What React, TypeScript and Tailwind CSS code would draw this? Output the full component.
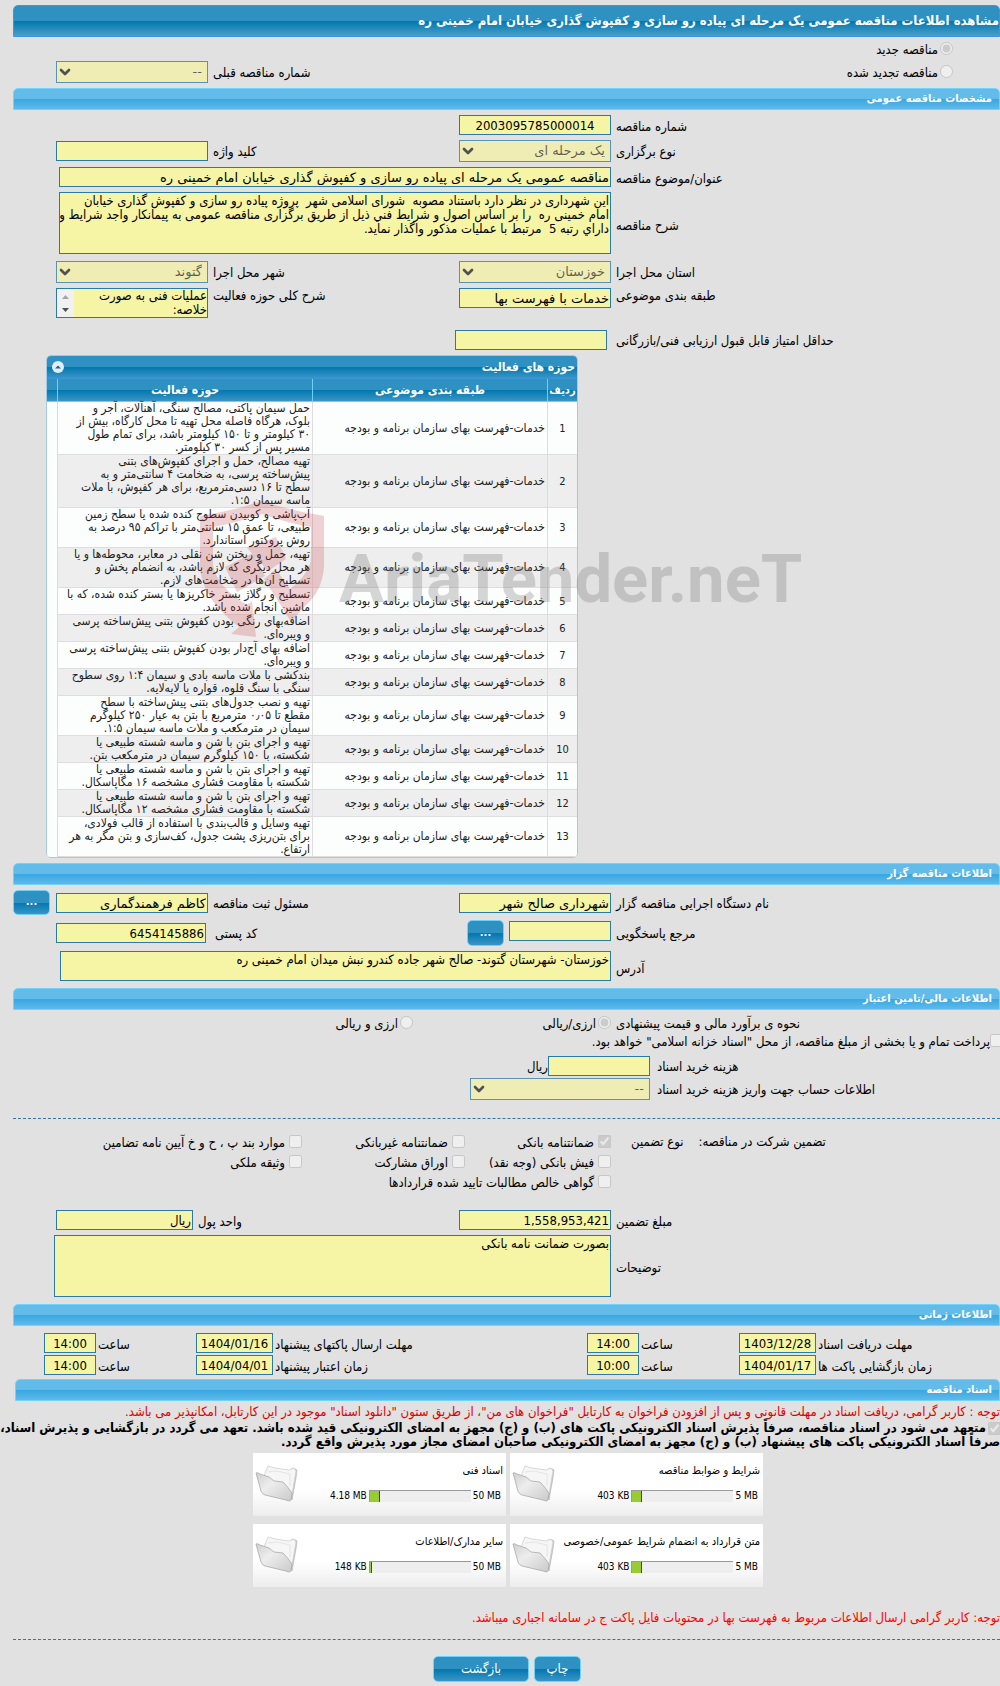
import React, { useId } from 'react';
import { ChevronDown } from 'lucide-react';

const field =
  'block w-full h-5 rounded-none border border-[#2a7aa8] bg-[#f6f4a5] px-px text-[13px] leading-[18px] text-black outline-none';
const area =
  'block w-full resize-none overflow-hidden rounded-none border border-[#2a7aa8] bg-[#f6f4a5] px-px py-px text-[13px] leading-[14px] text-black outline-none';
const wide = "font-['DejaVu_Sans',sans-serif]";
const formGrid = 'grid grid-cols-[389fr_152px_251fr_152px] pl-14';

type LabelProps = { htmlFor?: string; children: React.ReactNode; className?: string };

function Label({ htmlFor, children, className = 'pt-1' }: LabelProps) {
  return (
    <label htmlFor={htmlFor} className={`block whitespace-nowrap pl-[5px] text-left leading-4 ${className}`}>
      {children}
    </label>
  );
}

function Section({ children, className = 'ml-[13px]' }: { children: React.ReactNode; className?: string }) {
  return (
    <h2
      className={`h-[22px] rounded-t-[5px] border border-[#74d2fa] bg-[linear-gradient(#63bbea_0_10px,#37a7e2_10px,#5fb9ea)] px-[7px] text-[11px] font-bold leading-5 text-white ${className}`}
    >
      {children}
    </h2>
  );
}

function Choice({ id, value, className = 'w-full' }: { id: string; value: string; className?: string }) {
  return (
    <div className={`relative h-[22px] opacity-75 ${className}`}>
      <select
        id={id}
        disabled
        className={`block h-[22px] w-full appearance-none rounded-none border border-[#2a7aa8] bg-[#f4f2a4] px-[5px] text-[13px] leading-5 text-black/80 ${wide}`}
      >
        <option>{value}</option>
      </select>
      <ChevronDown className="pointer-events-none absolute left-px top-[3px] size-4" strokeWidth={4} color="#222" />
    </div>
  );
}

function Tick({
  type,
  label,
  checked = false,
  className = '',
  gap = 'gap-1',
}: {
  type: 'radio' | 'checkbox';
  label: string;
  checked?: boolean;
  className?: string;
  gap?: string;
}) {
  const id = useId();
  return (
    <div className={`flex items-center whitespace-nowrap ${gap} ${className}`}>
      <input id={id} type={type} disabled checked={checked} readOnly className="m-0 size-[13px] shrink-0" />
      <label htmlFor={id} className="pt-[3px] leading-4">
        {label}
      </label>
    </div>
  );
}

const glossy =
  'rounded-[5px] border border-[#6fd0fa] bg-[linear-gradient(#2e91c1_0_50%,#0077b0_50%,#3a95c4)] text-white';

const agency = 'خدمات-فهرست بهای سازمان برنامه و بودجه';

const activities: string[][] = [
  ['حمل سیمان پاکتی، مصالح سنگی، آهنآلات، آجر و', 'بلوک، هرگاه فاصله محل تهیه تا محل کارگاه، بیش از', '۳۰ کیلومتر و تا ۱۵۰ کیلومتر باشد، برای تمام طول', 'مسیر پس از کسر ۳۰ کیلومتر.'],
  ['تهیه مصالح، حمل و اجرای کفپوش‌های بتنی', 'پیش‌ساخته پرسی، به ضخامت ۴ سانتی‌متر و به', 'سطح تا ۱۶ دسی‌مترمربع، برای هر کفپوش، با ملات', 'ماسه سیمان ۱:۵.'],
  ['آب‌پاشی و کوبیدن سطوح کنده شده یا سطح زمین', 'طبیعی، تا عمق ۱۵ سانتی‌متر با تراکم ۹۵ درصد به', 'روش پروکتور استاندارد.'],
  ['تهیه، حمل و ریختن شن نقلی در معابر، محوطه‌ها و یا', 'هر محل دیگری که لازم باشد، به انضمام پخش و', 'تسطیح آن‌ها در ضخامت‌های لازم.'],
  ['تسطیح و رگلاژ بستر خاکریزها یا بستر کنده شده، که با', 'ماشین انجام شده باشد.'],
  ['اضافه‌بهای رنگی بودن کفپوش بتنی پیش‌ساخته پرسی', 'و ویبره‌ای.'],
  ['اضافه بهای آج‌دار بودن کفپوش بتنی پیش‌ساخته پرسی', 'و ویبره‌ای.'],
  ['بندکشی با ملات ماسه بادی و سیمان ۱:۴ روی سطوح', 'سنگی با سنگ قلوه، قواره یا لایه‌لایه.'],
  ['تهیه و نصب جدول‌های بتنی پیش‌ساخته با سطح', 'مقطع تا ۰٫۰۵ مترمربع با بتن به عیار ۲۵۰ کیلوگرم', 'سیمان در مترمکعب و ملات ماسه سیمان ۱:۵.'],
  ['تهیه و اجرای بتن با شن و ماسه شسته طبیعی یا', 'شکسته، با ۱۵۰ کیلوگرم سیمان در مترمکعب بتن.'],
  ['تهیه و اجرای بتن با شن و ماسه شسته طبیعی یا', 'شکسته با مقاومت فشاری مشخصه ۱۶ مگاپاسکال.'],
  ['تهیه و اجرای بتن با شن و ماسه شسته طبیعی یا', 'شکسته با مقاومت فشاری مشخصه ۱۲ مگاپاسکال.'],
  ['تهیه وسایل و قالب‌بندی با استفاده از قالب فولادی،', 'برای بتن‌ریزی پشت جدول، کف‌سازی و بتن مگر به هر', 'ارتفاع.'],
];

function ActivityTable() {
  const head =
    'h-[23px] border-b border-[#6cd0f8] bg-[linear-gradient(#2e91c1_0_50%,#0077b0_50%,#3a95c4)] p-0 text-center font-bold text-white whitespace-nowrap';
  return (
    <div className="relative mt-[5px] ml-[46px] w-[532px]">
      <div className="overflow-hidden rounded-[5px] border border-[#a6c9e2] bg-[#fcfefe]">
        <div className="flex h-[23px] items-center justify-between border-b border-[#3c96dc] bg-[linear-gradient(#2e91c1_0_50%,#0077b0_50%,#3a95c4)] pl-[5px] pr-0.5 text-[12px] font-bold text-white">
          <span>حوزه های فعالیت</span>
          <button type="button" aria-label="بستن جدول" className="grid size-3 place-items-center rounded-full bg-[#e4ecf8]">
            <svg viewBox="0 0 12 12" className="size-3">
              <path d="M3 7.5L6 4.5L9 7.5Z" fill="#0a6a9c" />
            </svg>
          </button>
        </div>
        <table className="w-full table-fixed border-separate border-spacing-0 text-[12px] leading-[13px] text-[#222]">
          <colgroup>
            <col className="w-[30px]" />
            <col className="w-[235px]" />
            <col className="w-[255px]" />
            <col />
          </colgroup>
          <thead>
            <tr>
              <th className={`${head} border-l text-[11px]`}>ردیف</th>
              <th className={`${head} border-l`}>طبقه بندی موضوعی</th>
              <th className={`${head} border-l`}>حوزه فعالیت</th>
              <th aria-label="اسکرول" className={head} />
            </tr>
          </thead>
          <tbody>
            {activities.map((lines, i) => (
              <tr key={i} className={i % 2 ? 'bg-[#eee]' : 'bg-[#fcfefe]'}>
                <td className="border-b border-l border-[#ddd] p-0 text-center text-[11px]">{i + 1}</td>
                <td className="border-b border-l border-[#ddd] py-0 pr-0.5 pl-0 whitespace-nowrap">{agency}</td>
                <td className="border-b border-l border-[#ddd] py-0 pr-0.5 pl-0 whitespace-nowrap">
                  {lines.map((line) => (
                    <div key={line} className="h-[13px]">
                      {line}
                    </div>
                  ))}
                </td>
                <td className="bg-[#fcfefe] p-0" />
              </tr>
            ))}
          </tbody>
        </table>
      </div>
      <svg
        viewBox="0 0 620 150"
        className="pointer-events-none absolute top-[142px] left-[146px] h-[150px] w-[620px]"
        direction="ltr"
        aria-hidden="true"
      >
        <g fill="#c8323c" fillOpacity="0.22">
          <path
            fillRule="evenodd"
            d="M8 19Q40 14 70 4Q100 14 132 19V70Q130 95 113 109L99 125L88 107L72 82L84 72L98 92Q119 75 119 60V30Q95 26 70 17Q45 26 21 30V68Q25 90 55 108L60 104L64 140L39 137L47 130Q8 100 8 68Z"
          />
          <path d="M33 70L61 56L73 79L45 95ZM55 51L84 40L94 62L76 74Z" />
        </g>
        <text
          x="147"
          y="105"
          fill="#777"
          fillOpacity="0.3"
          fontFamily="Roboto, sans-serif"
          fontWeight="700"
          fontSize="67"
        >
          AriaTender.neT
        </text>
      </svg>
    </div>
  );
}

function Folder() {
  return (
    <svg viewBox="0 0 44 40" className="size-11" aria-hidden="true">
      <defs>
        <linearGradient id="folderFront" x1="0" y1="0" x2="1" y2="1">
          <stop offset="0" stopColor="#cfcfcf" />
          <stop offset="0.4" stopColor="#ededed" />
          <stop offset="1" stopColor="#cacaca" />
        </linearGradient>
      </defs>
      <path d="M37 36L34 18L36 5Q39 3 42 6L41 14Z" fill="#c6c6c6" stroke="#b4b4b4" strokeWidth="0.6" />
      <path d="M9 12L13 2L20 4L34 6L39 4L41 7L37 30L14 20Z" fill="#f6f6f6" stroke="#cfcfcf" strokeWidth="0.8" />
      <path d="M13 8L22 7L35 10L35 22" fill="none" stroke="#e0e0e0" strokeWidth="0.8" />
      <path
        d="M1 9Q2 8 5 10L14 13L19 17L28 18Q33 23 37 29L36 36Q35 38 31 36L10 31Q7 30 6 27Z"
        fill="url(#folderFront)"
        stroke="#a9a9a9"
        strokeWidth="0.8"
      />
    </svg>
  );
}

function DocCard({ title, used, limit, percent }: { title: string; used: string; limit: string; percent: number }) {
  return (
    <article className="flex h-[63px] w-[253px] items-start justify-between bg-[linear-gradient(#fff_60%,#ededed)] pr-[3px] pl-0.5 text-[11px]">
      <div className="pt-[10px]">
        <h3 className="h-4 whitespace-nowrap leading-4">{title}</h3>
        <div dir="ltr" className="mt-[9px] flex w-[192px] items-center justify-end gap-0.5 pr-0.5 text-[10px] leading-4">
          <span>{used}</span>
          <div className="h-3 w-[102px] border-t border-l border-[#999] bg-[#eee]">
            <div className="h-full border-r border-[#444] bg-[#9c3]" style={{ width: `${percent}%` }} />
          </div>
          <span>{limit}</span>
        </div>
      </div>
      <div className="pt-[9px]">
        <Folder />
      </div>
    </article>
  );
}

function Deadline({ id, label, date, time }: { id: string; label: string; date: string; time: string }) {
  return (
    <>
      <Label htmlFor={id} className="pt-1 !pl-0.5">{label}</Label>
      <input id={id} readOnly defaultValue={date} className={`${field} text-center`} dir="ltr" />
      <Label htmlFor={`${id}-time`} className="pt-1 !pl-0.5">ساعت</Label>
      <input id={`${id}-time`} readOnly defaultValue={time} className={`${field} text-center`} dir="ltr" />
    </>
  );
}

export default function App() {
  return (
    <main
      dir="rtl"
      className="min-h-[1686px] overflow-hidden bg-[#e1e1e1] pt-[5px] font-['DejaVu_Sans_Condensed','DejaVu_Sans',sans-serif] text-[13px] text-black"
    >
      <h1 className="ml-[13px] flex h-8 items-center whitespace-nowrap rounded-t-[5px] border border-[#3c96dc] bg-[linear-gradient(#2e91c1_0_50%,#0077b0_50%,#4a9fc8)] text-[13px] font-bold text-white">
        مشاهده اطلاعات مناقصه عمومی یک مرحله ای پیاده رو سازی و کفپوش گذاری خیابان امام خمینی ره
      </h1>

      <div className="flex h-[51px] justify-between pr-[47px] pl-14">
        <div>
          <Tick type="radio" checked label="مناقصه جدید" className="h-[23px]" gap="gap-0.5" />
          <Tick type="radio" label="مناقصه تجدید شده" className="h-[23px]" gap="gap-0.5" />
        </div>
        <div className="flex pt-6">
          <Label htmlFor="previous">شماره مناقصه قبلی</Label>
          <Choice id="previous" value="--" className="w-[152px]" />
        </div>
      </div>

      <Section>مشخصات مناقصه عمومی</Section>
      <div className={`${formGrid} mt-[5px]`}>
        <Label htmlFor="number">شماره مناقصه</Label>
        <input id="number" readOnly defaultValue="2003095785000014" className={`${field} text-center`} />
      </div>
      <div className={`${formGrid} mt-[5px]`}>
        <Label htmlFor="kind">نوع برگزاری</Label>
        <Choice id="kind" value="یک مرحله ای" />
        <Label htmlFor="keyword">کلید واژه</Label>
        <input id="keyword" readOnly className={`${field} mt-px`} />
      </div>
      <div className="mt-[5px] grid grid-cols-[389fr_552fr] pl-[59px]">
        <Label htmlFor="title">عنوان/موضوع مناقصه</Label>
        <input
          id="title"
          readOnly
          defaultValue="مناقصه عمومی یک مرحله ای پیاده رو سازی و کفپوش گذاری خیابان امام خمینی ره"
          className={`${field} ${wide}`}
        />
      </div>
      <div className="mt-[5px] grid grid-cols-[389fr_552fr] pl-[59px]">
        <Label htmlFor="description" className="self-center pt-1.5">شرح مناقصه</Label>
        <textarea
          id="description"
          readOnly
          className={`${area} h-[62px] whitespace-pre`}
          defaultValue={
            'این شهرداری در نظر دارد باستناد مصوبه  شورای اسلامی شهر  پروژه پیاده رو سازی و کفپوش گذاری خیابان\nامام خمینی ره  را بر اساس اصول و شرایط فني ذیل از طریق برگزاری مناقصه عمومی به پیمانکار واجد شرایط و\nداراي رتبه 5  مرتبط با عملیات مذکور واگذار نماید.'
          }
        />
      </div>
      <div className={`${formGrid} mt-[7px]`}>
        <Label htmlFor="province">استان محل اجرا</Label>
        <Choice id="province" value="خوزستان" />
        <Label htmlFor="city">شهر محل اجرا</Label>
        <Choice id="city" value="گتوند" />
      </div>
      <div className={`${formGrid} mt-[5px]`}>
        <Label htmlFor="subject" className="pt-0">طبقه بندی موضوعی</Label>
        <input id="subject" readOnly defaultValue="خدمات با فهرست بها" className={`${field} ${wide}`} />
        <Label htmlFor="scope" className="pt-0">شرح کلی حوزه فعالیت</Label>
        <div className="flex h-[30px] overflow-hidden border border-[#2a7aa8] bg-[#f6f4a5]">
          <textarea
            id="scope"
            readOnly
            className="block h-7 min-w-0 flex-1 resize-none overflow-hidden whitespace-pre text-[13px] leading-[14px] outline-none"
            defaultValue={'عملیات فنی به صورت\nخلاصه:'}
          />
          <svg viewBox="0 0 17 28" className="h-7 w-[17px] bg-[#f1f1f1]" aria-hidden="true">
            <path d="M5 10L8.500 6L12 10Z" fill="#a3a3a3" />
            <path d="M5 19L8.500 23L12 19Z" fill="#505050" />
          </svg>
        </div>
      </div>
      <div className="mt-3 grid grid-cols-[393fr_152px_455fr]">
        <Label htmlFor="score" className="pt-[3px] !pl-[9px]">حداقل امتیاز قابل قبول ارزیابی فنی/بازرگانی</Label>
        <input id="score" readOnly className={field} />
      </div>

      <div className="flex justify-end">
        <ActivityTable />
      </div>

      <Section className="mt-[5px] ml-[13px]">اطلاعات مناقصه گزار</Section>
      <div className="mt-[5px] grid grid-cols-[389fr_152px_251fr_152px_43px] pl-[13px]">
        <Label htmlFor="agency" className="pt-1.5">نام دستگاه اجرایی مناقصه گزار</Label>
        <input id="agency" readOnly defaultValue="شهرداری صالح شهر" className={`${field} ${wide} mt-[3px]`} />
        <Label htmlFor="clerk" className="pt-1.5">مسئول ثبت مناقصه</Label>
        <input id="clerk" readOnly defaultValue="کاظم فرهمندگماری" className={`${field} ${wide} mt-[3px]`} />
        <button type="button" className={`${glossy} mr-1.5 h-[25px] text-[11px] font-bold`}>...</button>
      </div>
      <div className="mt-[5px] grid grid-cols-[389fr_152px_253fr_150px] pl-14">
        <Label htmlFor="contact" className="pt-1.5">مرجع پاسخگویی</Label>
        <div className="flex justify-between">
          <input id="contact" readOnly className={`${field} mt-px !w-[102px]`} />
          <button type="button" className={`${glossy} ml-2 h-[26px] w-[37px] text-[11px] font-bold`}>...</button>
        </div>
        <Label htmlFor="postal" className="pt-1.5 !pl-[9px]">کد پستی</Label>
        <input id="postal" readOnly defaultValue="6454145886" className={`${field} mt-[3px]`} />
      </div>
      <div className="mt-[5px] grid grid-cols-[389fr_551fr] pl-[60px]">
        <Label htmlFor="address" className="pt-2.5">آدرس</Label>
        <textarea
          id="address"
          readOnly
          className={`${area} h-[30px]`}
          defaultValue="خوزستان- شهرستان گتوند- صالح شهر جاده کندرو نبش میدان امام خمینی ره"
        />
      </div>

      <Section className="mt-[7px] ml-[13px]">اطلاعات مالی/تامین اعتبار</Section>
      <div className="flex h-6 items-center">
        <span className="w-[389px] pt-[3px] pl-[5px] text-left leading-4">نحوه ی برآورد مالی و قیمت پیشنهادی</span>
        <Tick type="radio" checked label="ارزی/ریالی" className="w-[198px]" gap="gap-0.5" />
        <Tick type="radio" label="ارزی و ریالی" gap="gap-0.5" />
      </div>
      <Tick
        type="checkbox"
        label={'پرداخت تمام و یا بخشی از مبلغ مناقصه، از محل "اسناد خزانه اسلامی" خواهد بود.'}
        className="-mr-[3px] h-[13px]"
        gap="gap-0"
      />
      <div className="mt-[9px] flex">
        <Label htmlFor="fee" className="w-[350px] pt-[3px] !pl-[7px]">هزینه خرید اسناد</Label>
        <input id="fee" readOnly className={`${field} !w-[102px]`} />
        <span className="pt-[3px] leading-4">ریال</span>
      </div>
      <div className="mt-0.5 flex">
        <Label htmlFor="account" className="w-[350px] pt-1 !pl-[7px]">اطلاعات حساب جهت واریز هزینه خرید اسناد</Label>
        <Choice id="account" value="--" className="w-[180px]" />
      </div>

      <hr className="mt-[18px] ml-[13px] border-t border-dashed border-[#2a7aa8]" />

      <div className="mt-3 flex">
        <span className="w-[369px] shrink-0 pt-[3px] text-left leading-4">
          <span>تضمین شرکت در مناقصه:</span>
          <span className="mr-[15px]">نوع تضمین</span>
        </span>
        <div className="mr-5 grid flex-1 grid-cols-[146px_163px_1fr] grid-rows-[20px_20px_20px]">
          <Tick type="checkbox" checked label="ضمانتنامه بانکی" />
          <Tick type="checkbox" label="ضمانتنامه غیربانکی" />
          <Tick type="checkbox" label="موارد بند پ ، ح و خ آیین نامه تضامین" />
          <Tick type="checkbox" label="فیش بانکی (وجه نقد)" />
          <Tick type="checkbox" label="اوراق مشارکت" />
          <Tick type="checkbox" label="وثیقه ملکی" />
          <Tick type="checkbox" label="گواهی خالص مطالبات تایید شده قراردادها" className="col-span-2" />
        </div>
      </div>

      <div className="mt-[19px] grid grid-cols-[389fr_152px_266fr_137px] pl-14">
        <Label htmlFor="amount">مبلغ تضمین</Label>
        <input id="amount" readOnly defaultValue="1,558,953,421" className={field} />
        <Label htmlFor="currency">واحد پول</Label>
        <input id="currency" readOnly defaultValue="ریال" className={field} />
      </div>
      <div className="mt-[5px] grid grid-cols-[389fr_557fr] pl-[54px]">
        <Label htmlFor="notes" className="self-center pt-1">توضیحات</Label>
        <textarea id="notes" readOnly className={`${area} h-[62px]`} defaultValue="بصورت ضمانت نامه بانکی" />
      </div>

      <Section className="mt-[7px] ml-[13px]">اطلاعات زمانی</Section>
      <div className="mt-[7px] grid grid-cols-[184fr_77px_100fr_52px_314fr_77px_100fr_52px] gap-y-0.5 pl-11">
        <Deadline id="receive" label="مهلت دریافت اسناد" date="1403/12/28" time="14:00" />
        <Deadline id="send" label="مهلت ارسال پاکتهای پیشنهاد" date="1404/01/16" time="14:00" />
        <Deadline id="open" label="زمان بازگشایی پاکت ها" date="1404/01/17" time="10:00" />
        <Deadline id="validity" label="زمان اعتبار پیشنهاد" date="1404/04/01" time="14:00" />
      </div>

      <Section className="mt-1 ml-[15px]">اسناد مناقصه</Section>
      <p className="mt-0.5 whitespace-nowrap leading-[18px] text-[#e00000]">
        توجه : کاربر گرامی، دریافت اسناد در مهلت قانونی و پس از افزودن فراخوان به کارتابل "فراخوان های من"، از طریق ستون "دانلود اسناد" موجود در این کارتابل، امکانپذیر می باشد.
      </p>
      <div className="whitespace-nowrap font-bold leading-[14px]">
        <div className="-mr-px flex items-center gap-0.5">
          <input id="pledge" type="checkbox" disabled checked readOnly className="m-0 size-[13px] shrink-0" />
          <label htmlFor="pledge">
            متعهد می شود در اسناد مناقصه، صرفاً پذیرش اسناد الکترونیکی پاکت های (ب) و (ج) مجهز به امضای الکترونیکی قید شده باشد. تعهد می گردد در بازگشایی و پذیرش اسناد،
          </label>
        </div>
        <div>صرفاً اسناد الکترونیکی پاکت های پیشنهاد (ب) و (ج) مجهز به امضای الکترونیکی صاحبان امضای مجاز مورد پذیرش واقع گردد.</div>
      </div>

      <div className="mt-1 grid grid-cols-[253px_253px] gap-x-1 gap-y-2 pr-[237px]">
        <DocCard title="شرایط و ضوابط مناقصه" used="403 KB" limit="5 MB" percent={9} />
        <DocCard title="اسناد فنی" used="4.18 MB" limit="50 MB" percent={10} />
        <DocCard title="متن قرارداد به انضمام شرایط عمومی/خصوصی" used="403 KB" limit="5 MB" percent={9} />
        <DocCard title="سایر مدارک/اطلاعات" used="148 KB" limit="50 MB" percent={2} />
      </div>

      <p className="mt-[22px] whitespace-nowrap leading-[18px] text-[#f00]">
        توجه: کاربر گرامی ارسال اطلاعات مربوط به فهرست بها در محتویات فایل پاکت ج در سامانه اجباری میباشد.
      </p>
      <hr className="mt-3 ml-[13px] border-t border-dashed border-[#2a7aa8]" />
      <div className="mt-4 flex justify-center gap-[5px] pl-3.5">
        <button type="button" className={`${glossy} h-[26px] w-[47px]`}>چاپ</button>
        <button type="button" className={`${glossy} h-[26px] w-24`}>بازگشت</button>
      </div>
    </main>
  );
}
